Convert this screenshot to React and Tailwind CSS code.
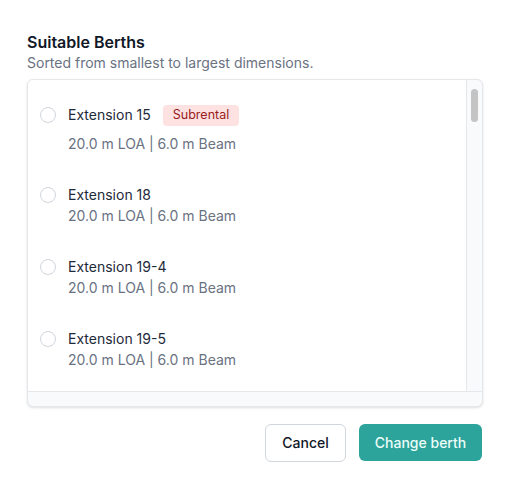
const berths = [
  { id: 'ext-15', name: 'Extension 15', loa: '20.0', beam: '6.0', subrental: true },
  { id: 'ext-18', name: 'Extension 18', loa: '20.0', beam: '6.0' },
  { id: 'ext-19-4', name: 'Extension 19-4', loa: '20.0', beam: '6.0' },
  { id: 'ext-19-5', name: 'Extension 19-5', loa: '20.0', beam: '6.0' },
];

function BerthRow({ b }) {
  return (
    <label className="flex gap-3 pl-[12px] pt-4 pb-[15px] cursor-pointer">
      <span className={`flex items-center ${b.subrental ? 'h-[22px]' : 'h-5'}`}>
        <span className="w-4 h-4 rounded-full border border-gray-300 bg-white" />
      </span>
      <div className="flex flex-col">
        {b.subrental ? (
          <div className="flex items-center gap-3 h-[22px]">
            <span className="text-sm leading-5 text-gray-800">{b.name}</span>
            <span className="px-[10px] h-[21px] flex items-center rounded bg-[#fee2e2] text-[#991b1b] text-[12.5px]">Subrental</span>
          </div>
        ) : (
          <span className="text-sm leading-5 text-gray-800">{b.name}</span>
        )}
        <span className={`text-sm leading-5 text-gray-500 ${b.subrental ? 'mt-2' : 'mt-px'}`}>
          {b.loa} m LOA | {b.beam} m Beam
        </span>
      </div>
    </label>
  );
}

export default function App() {
  return (
    <div className="px-[27px] pt-[31px] bg-white min-h-screen" style={{ fontFamily: 'Inter, "Noto Sans", sans-serif' }}>
      <h2 className="text-base leading-[22px] font-semibold text-gray-900">Suitable Berths</h2>
      <p className="text-sm leading-5 text-gray-500">Sorted from smallest to largest dimensions.</p>

      <div className="mt-[6px] rounded-md border border-gray-200 bg-[#f9fafb] shadow-sm overflow-hidden">
        <div className="flex h-[312px] border-b border-gray-200">
          <div className="flex-1 bg-white border-r border-gray-200 pt-[8px] overflow-hidden">
            {berths.map(b => <BerthRow key={b.id} b={b} />)}
          </div>
          <div className="w-[15px] pt-[9px] flex justify-center">
            <div className="w-[7px] h-[33px] rounded-full bg-[#c4c4c4]" />
          </div>
        </div>
        <div className="h-[14px]" />
      </div>

      <div className="mt-[17px] mr-px flex justify-end gap-[13px]">
        <button className="h-[38px] w-[81px] rounded-md border border-gray-300 bg-white text-sm font-medium text-gray-900 whitespace-nowrap">
          Cancel
        </button>
        <button className="h-[37px] w-[123px] rounded-md bg-[#2ca39b] text-sm font-medium text-[#ecfdf9] whitespace-nowrap">
          Change berth
        </button>
      </div>
    </div>
  );
}
